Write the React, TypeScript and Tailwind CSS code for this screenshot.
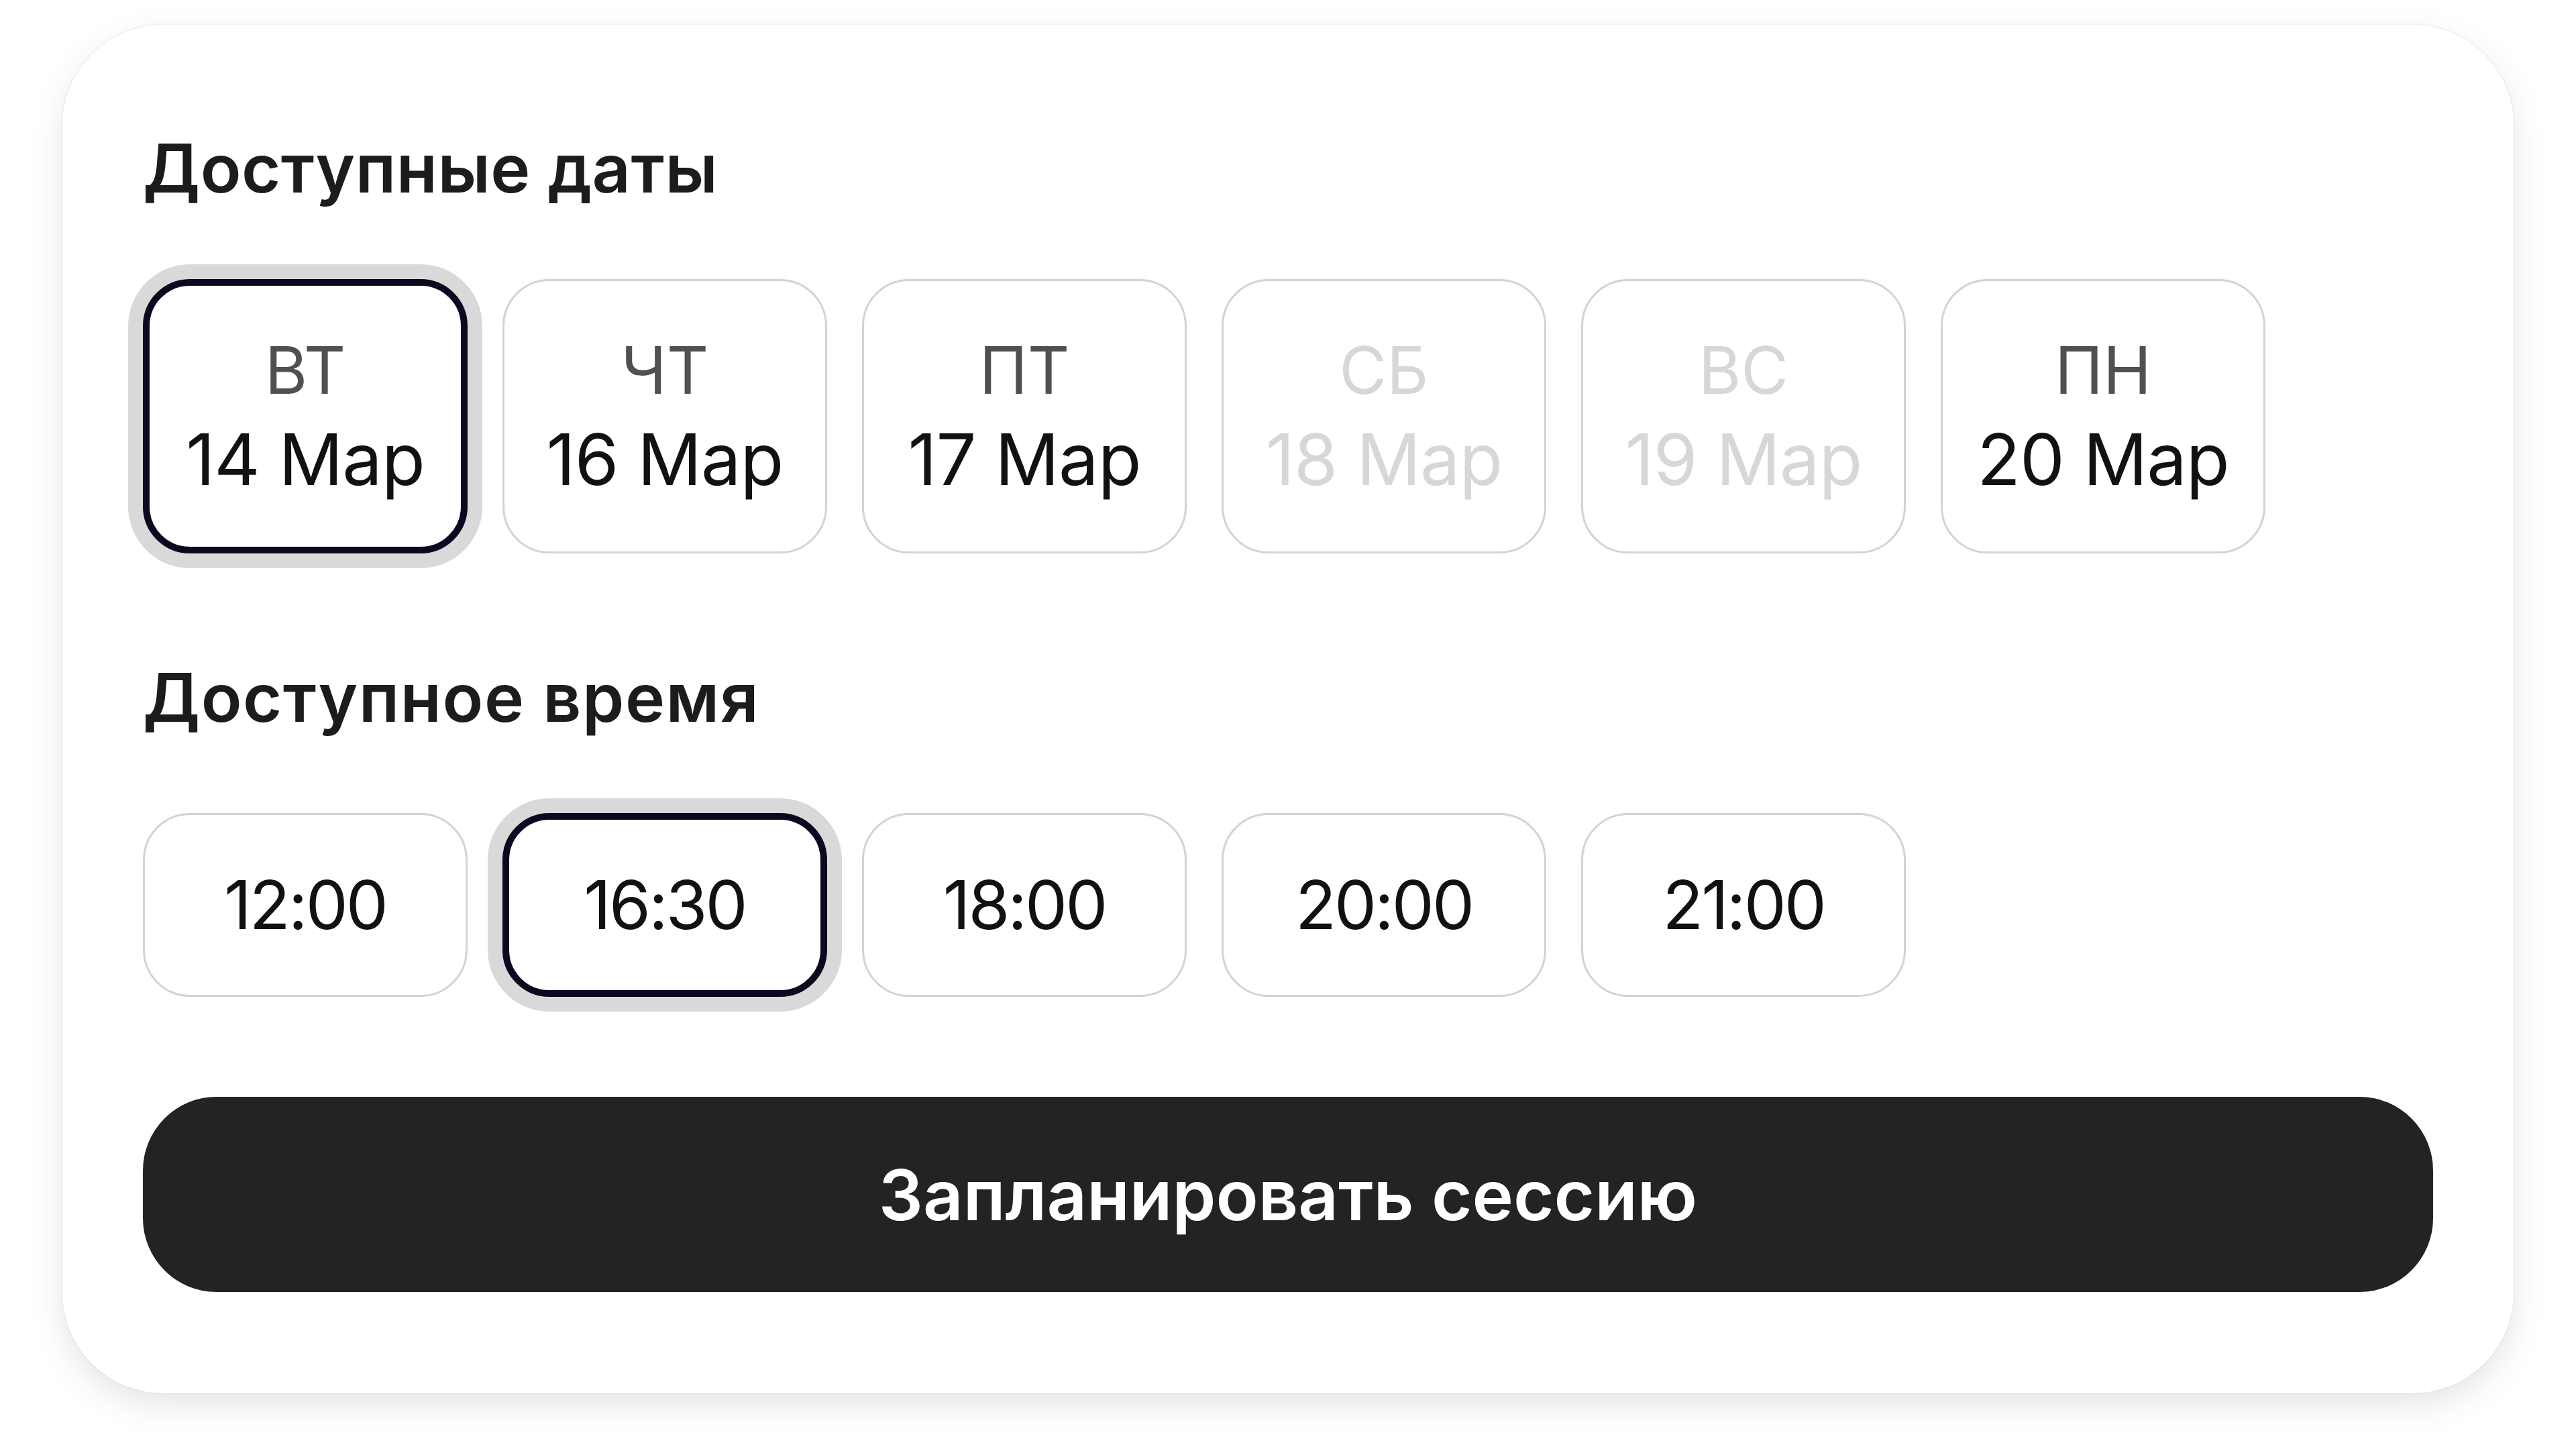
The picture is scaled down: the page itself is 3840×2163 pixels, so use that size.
import { useState } from "react";

type DateSlot = {
  day: string;
  date: string;
  disabled?: boolean;
};

const dates: DateSlot[] = [
  { day: "ВТ", date: "14 Мар" },
  { day: "ЧТ", date: "16 Мар" },
  { day: "ПТ", date: "17 Мар" },
  { day: "СБ", date: "18 Мар", disabled: true },
  { day: "ВС", date: "19 Мар", disabled: true },
  { day: "ПН", date: "20 Мар" },
];

const times = ["12:00", "16:30", "18:00", "20:00", "21:00"];

function DateCard({
  slot,
  active,
  onSelect,
}: {
  slot: DateSlot;
  active: boolean;
  onSelect: () => void;
}) {
  return (
    <button
      type="button"
      disabled={slot.disabled}
      onClick={onSelect}
      className={
        active
          ? "flex h-[409px] w-[484px] flex-col items-center justify-center gap-[32px] rounded-[70px] border-[10px] border-[#0c0820] bg-white shadow-[0_0_0_22px_#d9d9d9]"
          : "flex h-[409px] w-[484px] flex-col items-center justify-center gap-[32px] rounded-[70px] border-[3px] border-[#d3d3d3] bg-white"
      }
    >
      <span className={slot.disabled ? "text-[97px] leading-none text-[#d7d7d7]" : "text-[97px] leading-none text-[#505050]"}>
        {slot.day}
      </span>
      <span
        className={
          slot.disabled
            ? "text-[106px] leading-none tracking-[-1px] text-[#d7d7d7]"
            : "text-[106px] leading-none tracking-[-1px] text-[#111111]"
        }
      >
        {slot.date}
      </span>
    </button>
  );
}

function TimeCard({ label, active, onSelect }: { label: string; active: boolean; onSelect: () => void }) {
  return (
    <button
      type="button"
      onClick={onSelect}
      className={
        active
          ? "flex h-[274px] w-[484px] items-center justify-center rounded-[70px] border-[10px] border-[#0c0820] bg-white text-[100px] leading-none tracking-[-3px] text-[#111111] shadow-[0_0_0_22px_#d9d9d9]"
          : "flex h-[274px] w-[484px] items-center justify-center rounded-[70px] border-[3px] border-[#d3d3d3] bg-white text-[100px] leading-none tracking-[-3px] text-[#111111]"
      }
    >
      {label}
    </button>
  );
}

export default function App() {
  const [dateIndex, setDateIndex] = useState(0);
  const [timeIndex, setTimeIndex] = useState(1);

  return (
    <div className="min-h-screen bg-white pl-[93px] pt-[37px] font-['Inter',_'Noto_Sans',_sans-serif]">
      <div className="flex h-[2040px] w-[3654px] flex-col rounded-[150px] bg-white px-[120px] pt-[164px] shadow-[0_18px_50px_rgba(0,0,0,0.10),0_0_0_2px_rgba(0,0,0,0.03)]">
        <h2 className="text-[100px] font-semibold leading-none tracking-[0.5px] text-[#1c1c1c]">Доступные даты</h2>

        <div className="mt-[115px] flex gap-[52px]">
          {dates.map((slot, index) => (
            <DateCard key={slot.date} slot={slot} active={index === dateIndex} onSelect={() => setDateIndex(index)} />
          ))}
        </div>

        <h2 className="mt-[165px] text-[100px] font-semibold leading-none tracking-[1.5px] text-[#1c1c1c]">Доступное время</h2>

        <div className="mt-[122px] flex gap-[52px]">
          {times.map((time, index) => (
            <TimeCard key={time} label={time} active={index === timeIndex} onSelect={() => setTimeIndex(index)} />
          ))}
        </div>

        <button
          type="button"
          className="mt-[149px] flex h-[291px] w-full items-center justify-center rounded-[110px] bg-[#232323] text-[104px] font-semibold leading-none text-white"
        >
          Запланировать сессию
        </button>
      </div>
    </div>
  );
}
